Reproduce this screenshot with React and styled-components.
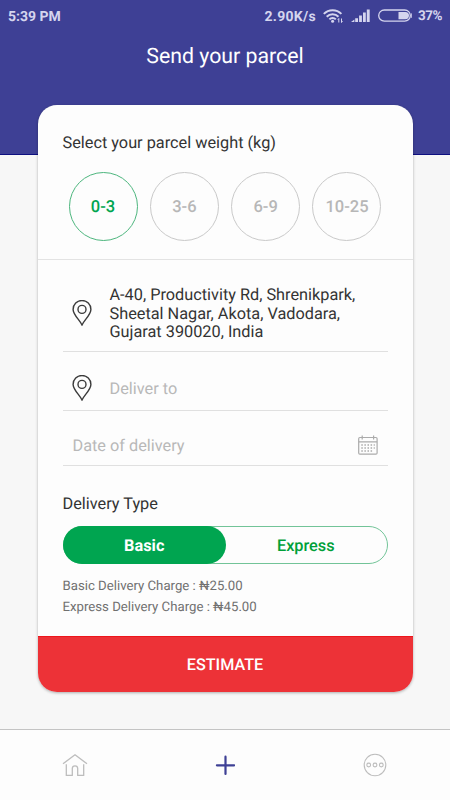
import React, { useState } from "react";
import styled, { createGlobalStyle } from "styled-components";

const GlobalStyle = createGlobalStyle`
  * { box-sizing: border-box; }
  body {
    margin: 0;
    font-family: Roboto, "Liberation Sans", sans-serif;
    text-rendering: geometricPrecision;
    background: #f7f7f7;
  }
  button {
    font-family: inherit;
    text-rendering: inherit;
    border: none;
    padding: 0;
    cursor: pointer;
  }
`;

const Screen = styled.div`
  width: 450px;
  height: 800px;
  overflow: hidden;
  display: flex;
  flex-direction: column;
  background: #f7f7f7;
`;

const Header = styled.header`
  height: 155px;
  flex: none;
  background: #3e4095;
  border-bottom: 1px solid #0e0f80;
`;

const StatusBar = styled.div`
  height: 32px;
  padding: 0 8px;
  display: flex;
  align-items: center;
  color: #d5d5ee;
  font-size: 14px;
  font-weight: 700;
  line-height: 32px;
`;

const Clock = styled.span`
  margin-right: auto;
  padding-top: 1px;
`;

const Speed = styled.span`
  letter-spacing: 0.3px;
  margin-right: 7px;
  padding-top: 1px;
`;

const Battery = styled.span`
  width: 24px;
  font-size: 13.5px;
  letter-spacing: -0.5px;
  margin-left: 6px;
`;

const Title = styled.h1`
  margin: 9px 0 0;
  text-align: center;
  color: #fff;
  font-size: 21.3px;
  font-weight: 400;
  line-height: 32px;
`;

const Card = styled.main`
  width: 375px;
  height: 587px;
  flex: none;
  margin: -50px auto 0;
  display: flex;
  flex-direction: column;
  overflow: hidden;
  border-radius: 19px;
  background: #fdfdfd;
  box-shadow: 0 1px 3px rgba(0, 0, 0, 0.3);
`;

const WeightSection = styled.section`
  height: 155px;
  border-bottom: 1px solid #e3e3e3;
`;

const Label = styled.h2`
  margin: 0;
  padding: 28px 0 0 25px;
  color: #333;
  font-size: 16.3px;
  font-weight: 400;
  line-height: 20px;
`;

const WeightList = styled.div`
  display: flex;
  justify-content: space-between;
  padding: 19px 31px 0;
`;

const WeightButton = styled.button`
  width: 69px;
  height: 69px;
  padding-top: 2px;
  border-radius: 50%;
  background: transparent;
  border: 1px solid ${(props) => (props.$active ? "#4db67e" : "#c9c9c9")};
  color: ${(props) => (props.$active ? "#00a550" : "#b7b7b7")};
  font-size: 16.5px;
  font-weight: 500;
`;

const Row = styled.div`
  height: ${(props) => props.$height}px;
  margin: 0 25px;
  padding: ${(props) => props.$padding};
  display: flex;
  align-items: center;
  border-bottom: 1px solid #e0e0e0;
`;

const PinIcon = styled.svg`
  width: 20px;
  height: 26px;
  flex: none;
  margin-right: 18px;
`;

const Address = styled.div`
  padding-top: 3px;
  color: #333;
  font-size: 16.3px;
  line-height: 18.7px;
  white-space: nowrap;
`;

const Placeholder = styled.div`
  flex: 1;
  padding-top: 2px;
  color: #b8b8b8;
  font-size: 16.3px;
  line-height: 20px;
`;

const Segmented = styled.div`
  height: 38px;
  margin: 12px 25px 0;
  display: flex;
  border: 1px solid #72c498;
  border-radius: 19px;
`;

const Segment = styled.button`
  flex: 1;
  margin: -1px;
  padding-top: 1px;
  border-radius: 19px;
  background: ${(props) => (props.$active ? "#00a550" : "transparent")};
  color: ${(props) => (props.$active ? "#fff" : "#00a038")};
  font-size: 16.3px;
  font-weight: ${(props) => (props.$active ? 700 : 500)};
`;

const Charges = styled.div`
  padding: 13px 25px 0;
  color: #707070;
  font-size: 13.2px;
  line-height: 20.5px;
`;

const EstimateButton = styled.button`
  height: 56px;
  margin-top: auto;
  background: #ed3237;
  border-top: 1px solid #ee161b;
  color: #fff;
  font-size: 16.2px;
  font-weight: 500;
`;

const NavBar = styled.nav`
  height: 71px;
  margin-top: auto;
  display: flex;
  background: #fdfdfd;
  border-top: 1px solid #c4c4c4;
`;

const NavItem = styled.button`
  flex: 1;
  display: flex;
  align-items: center;
  justify-content: center;
  background: transparent;
  color: ${(props) => (props.$active ? "#3e4095" : "#bdbdbd")};
`;

const Pin = () => (
  <PinIcon viewBox="0 0 20 26" fill="none" stroke="#3b3b3b" strokeWidth="1.4">
    <path d="M10 25C8 20.5 1.1 14.6 1.1 9.4a8.9 8.9 0 0 1 17.8 0C18.9 14.6 12 20.5 10 25Z" />
    <circle cx="10" cy="9.4" r="4" />
  </PinIcon>
);

const Wifi = () => (
  <svg width="21" height="16" viewBox="0 0 21 16" fill="none" stroke="#d5d5ee" strokeWidth="2">
    <path d="M.8 5.9a12.4 12.4 0 0 1 17.6 0M3.7 8.7a8.3 8.3 0 0 1 11.8 0M6.4 11.4a4.5 4.5 0 0 1 6.4 0" />
    <circle cx="9.6" cy="13.3" r="1.5" fill="#d5d5ee" stroke="none" />
    <path d="M15.8 14.5v-4l-1 1.3M18.5 10.5v4l1-1.3" strokeWidth="1" />
  </svg>
);

const Signal = () => (
  <svg width="19" height="14" viewBox="0 0 19 14" fill="#d5d5ee" style={{ marginLeft: 7 }}>
    <path d="M0 13l3.4-2.5V13zM4.2 9.3H7V13H4.2zM8.1 6.6h2.8V13H8.1zM12 3.6h2.8V13H12zM15.8.5h2.9V13h-2.9z" />
  </svg>
);

const BatteryIcon = () => (
  <svg width="34" height="14" viewBox="0 0 34 14" fill="none" style={{ marginLeft: 8 }}>
    <rect x=".7" y="1" width="31.6" height="11.2" rx="5.6" stroke="#d5d5ee" strokeWidth="1.3" />
    <path d="M20.5 2.9h6.8a3.7 3.7 0 0 1 0 7.4h-6.8z" fill="#d5d5ee" />
    <path d="M33.3 4.4v4.4" stroke="#d5d5ee" />
  </svg>
);

const Calendar = () => (
  <svg width="20" height="20" viewBox="0 0 20 20" fill="none" stroke="#ababab">
    <rect x=".7" y="2.5" width="18.4" height="16.7" rx="1.2" strokeWidth="1.2" />
    <path d="M.7 6.8h18.4M4.2.5v4M15.6.5v4" strokeWidth="1.2" />
    <path d="M3.3 10h13.5M3.3 13h13.5M3.3 16h11" strokeWidth="1.4" strokeDasharray="1.5 1.6" />
  </svg>
);

const Home = () => (
  <svg width="26" height="24" viewBox="0 0 26 24" fill="none" stroke="currentColor" strokeWidth="1.3" strokeLinejoin="round">
    <path d="M1 10.8L13 1.8l12 9" />
    <path d="M4.3 11.3v11.1h6v-6.8a2.7 2.7 0 0 1 5.4 0v6.8h6V11.3" />
  </svg>
);

const Plus = () => (
  <svg width="20" height="20" viewBox="0 0 20 20" stroke="currentColor" strokeWidth="2.2" strokeLinecap="round">
    <path d="M10.5 1.7v17.2M1.9 10.3h17.2" />
  </svg>
);

const More = () => (
  <svg width="24" height="24" viewBox="0 0 24 24" fill="none" stroke="currentColor" strokeWidth="1.1">
    <circle cx="12" cy="12" r="10.8" />
    <circle cx="5.7" cy="12" r="1.9" />
    <circle cx="12" cy="12" r="1.9" />
    <circle cx="18.3" cy="12" r="1.9" />
  </svg>
);

const weights = ["0-3", "3-6", "6-9", "10-25"];
const deliveryTypes = ["Basic", "Express"];

const App = () => {
  const [weight, setWeight] = useState("0-3");
  const [type, setType] = useState("Basic");

  return (
    <Screen>
      <GlobalStyle />
      <Header>
        <StatusBar>
          <Clock>5:39 PM</Clock>
          <Speed>2.90K/s</Speed>
          <Wifi />
          <Signal />
          <BatteryIcon />
          <Battery>37%</Battery>
        </StatusBar>
        <Title>Send your parcel</Title>
      </Header>

      <Card>
        <WeightSection>
          <Label>Select your parcel weight (kg)</Label>
          <WeightList>
            {weights.map((item) => (
              <WeightButton key={item} $active={item === weight} onClick={() => setWeight(item)}>
                {item}
              </WeightButton>
            ))}
          </WeightList>
        </WeightSection>

        <Row $height={92} $padding="14px 0 0 9px">
          <Pin />
          <Address>
            A-40, Productivity Rd, Shrenikpark,<br />
            Sheetal Nagar, Akota, Vadodara,<br />
            Gujarat 390020, India
          </Address>
        </Row>
        <Row $height={59} $padding="14px 0 0 9px">
          <Pin />
          <Placeholder>Deliver to</Placeholder>
        </Row>
        <Row $height={55} $padding="14px 10px 0 10px">
          <Placeholder>Date of delivery</Placeholder>
          <Calendar />
        </Row>

        <Label>Delivery Type</Label>
        <Segmented>
          {deliveryTypes.map((item) => (
            <Segment key={item} $active={item === type} onClick={() => setType(item)}>
              {item}
            </Segment>
          ))}
        </Segmented>
        <Charges>
          <div>Basic Delivery Charge : ₦25.00</div>
          <div>Express Delivery Charge : ₦45.00</div>
        </Charges>
        <EstimateButton>ESTIMATE</EstimateButton>
      </Card>

      <NavBar>
        <NavItem><Home /></NavItem>
        <NavItem $active><Plus /></NavItem>
        <NavItem><More /></NavItem>
      </NavBar>
    </Screen>
  );
};

export default App;
